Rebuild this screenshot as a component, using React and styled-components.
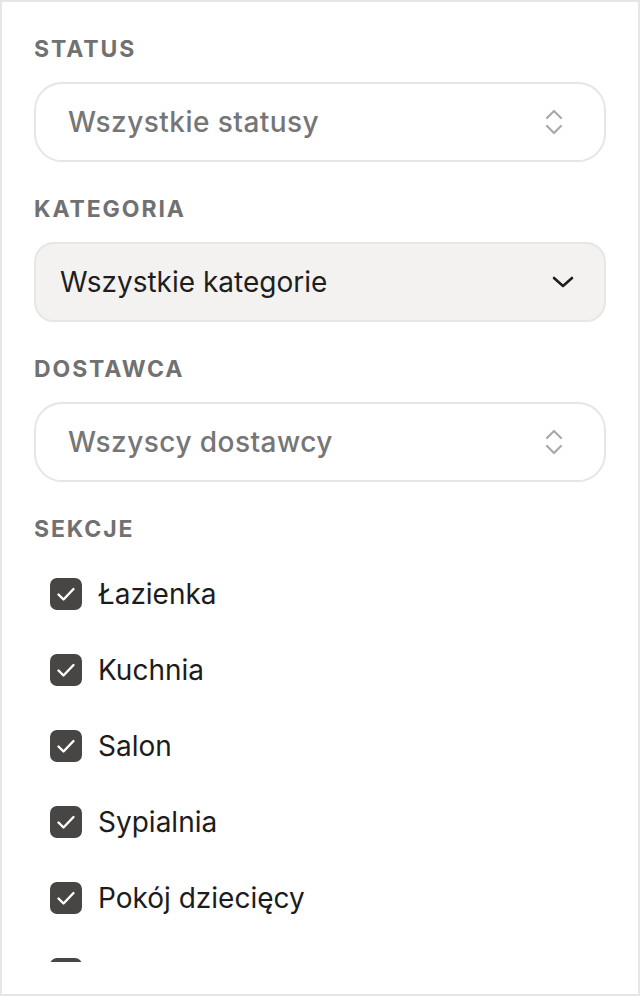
import React from "react";
import styled, { createGlobalStyle } from "styled-components";

const Global = createGlobalStyle`
  html, body { margin: 0; padding: 0; background: #ffffff; }
  body { font-family: Inter, "Noto Sans", "Liberation Sans", sans-serif; }
  * { box-sizing: border-box; }
`;

const Panel = styled.aside`
  width: 640px;
  height: 996px;
  border: 2px solid #e6e6e6;
  background: #ffffff;
  padding: 34px 32px 32px 32px;
  display: flex;
  flex-direction: column;
`;

const Scroll = styled.div`
  flex: 1;
  overflow: hidden;
  display: flex;
  flex-direction: column;
`;

const Section = styled.section`
  display: flex;
  flex-direction: column;
  gap: 20px;
  margin-bottom: 34px;
`;

const Label = styled.div`
  font-size: 23px;
  line-height: 26px;
  font-weight: 700;
  letter-spacing: 1.9px;
  color: #717171;
  text-transform: uppercase;
`;

const SelectBox = styled.div`
  height: 80px;
  display: flex;
  align-items: center;
  justify-content: space-between;
  border: 2px solid ${(p) => (p.$active ? "#e7e6e4" : "#e6e6e6")};
  background: ${(p) => (p.$active ? "#f3f2f1" : "#ffffff")};
  border-radius: ${(p) => (p.$active ? "20px" : "28px")};
  padding: 0 ${(p) => (p.$active ? "30px" : "38px")} 0 ${(p) => (p.$active ? "24px" : "32px")};
  font-size: 28px;
  font-weight: ${(p) => (p.$active ? 400 : 500)};
  letter-spacing: ${(p) => (p.$active ? "0" : "0.45px")};
  color: ${(p) => (p.$active ? "#1e1e1e" : "#767676")};
`;

const SelectText = styled.span`
  line-height: 34px;
`;

const List = styled.div`
  display: flex;
  flex-direction: column;
  margin-top: 14px;
`;

const Row = styled.label`
  height: 76px;
  display: flex;
  align-items: center;
  gap: 16px;
  padding-left: 16px;
  font-size: 28px;
  color: #1c1c1c;
  flex-shrink: 0;
`;

const Box = styled.span`
  width: 32px;
  height: 32px;
  border-radius: 7px;
  background: #474645;
  display: flex;
  align-items: center;
  justify-content: center;
  flex-shrink: 0;
`;

const UpDown = () => (
  <svg width="24" height="28" viewBox="0 0 24 28" fill="none" stroke="#a9a9a9" strokeWidth="2.2" strokeLinecap="round" strokeLinejoin="round">
    <path d="M5 10l7-7 7 7" />
    <path d="M5 18l7 7 7-7" />
  </svg>
);

const Down = () => (
  <svg width="22" height="14" viewBox="0 0 22 14" fill="none" stroke="#1e1e1e" strokeWidth="2.6" strokeLinecap="round" strokeLinejoin="round">
    <path d="M2 3l9 8 9-8" />
  </svg>
);

const Check = () => (
  <svg width="22" height="18" viewBox="0 0 22 18" fill="none" stroke="#ffffff" strokeWidth="2.4" strokeLinecap="round" strokeLinejoin="round">
    <path d="M3.5 9.5l5 5L18.5 4" />
  </svg>
);

const sections = ["Łazienka", "Kuchnia", "Salon", "Sypialnia", "Pokój dziecięcy", "Przedpokój"];

export default function App() {
  return (
    <>
      <Global />
      <Panel>
        <Scroll>
          <Section>
            <Label>Status</Label>
            <SelectBox>
              <SelectText>Wszystkie statusy</SelectText>
              <UpDown />
            </SelectBox>
          </Section>
          <Section>
            <Label>Kategoria</Label>
            <SelectBox $active>
              <SelectText>Wszystkie kategorie</SelectText>
              <Down />
            </SelectBox>
          </Section>
          <Section>
            <Label>Dostawca</Label>
            <SelectBox>
              <SelectText>Wszyscy dostawcy</SelectText>
              <UpDown />
            </SelectBox>
          </Section>
          <Label>Sekcje</Label>
          <List>
            {sections.map((s) => (
              <Row key={s}>
                <Box>
                  <Check />
                </Box>
                {s}
              </Row>
            ))}
          </List>
        </Scroll>
      </Panel>
    </>
  );
}
